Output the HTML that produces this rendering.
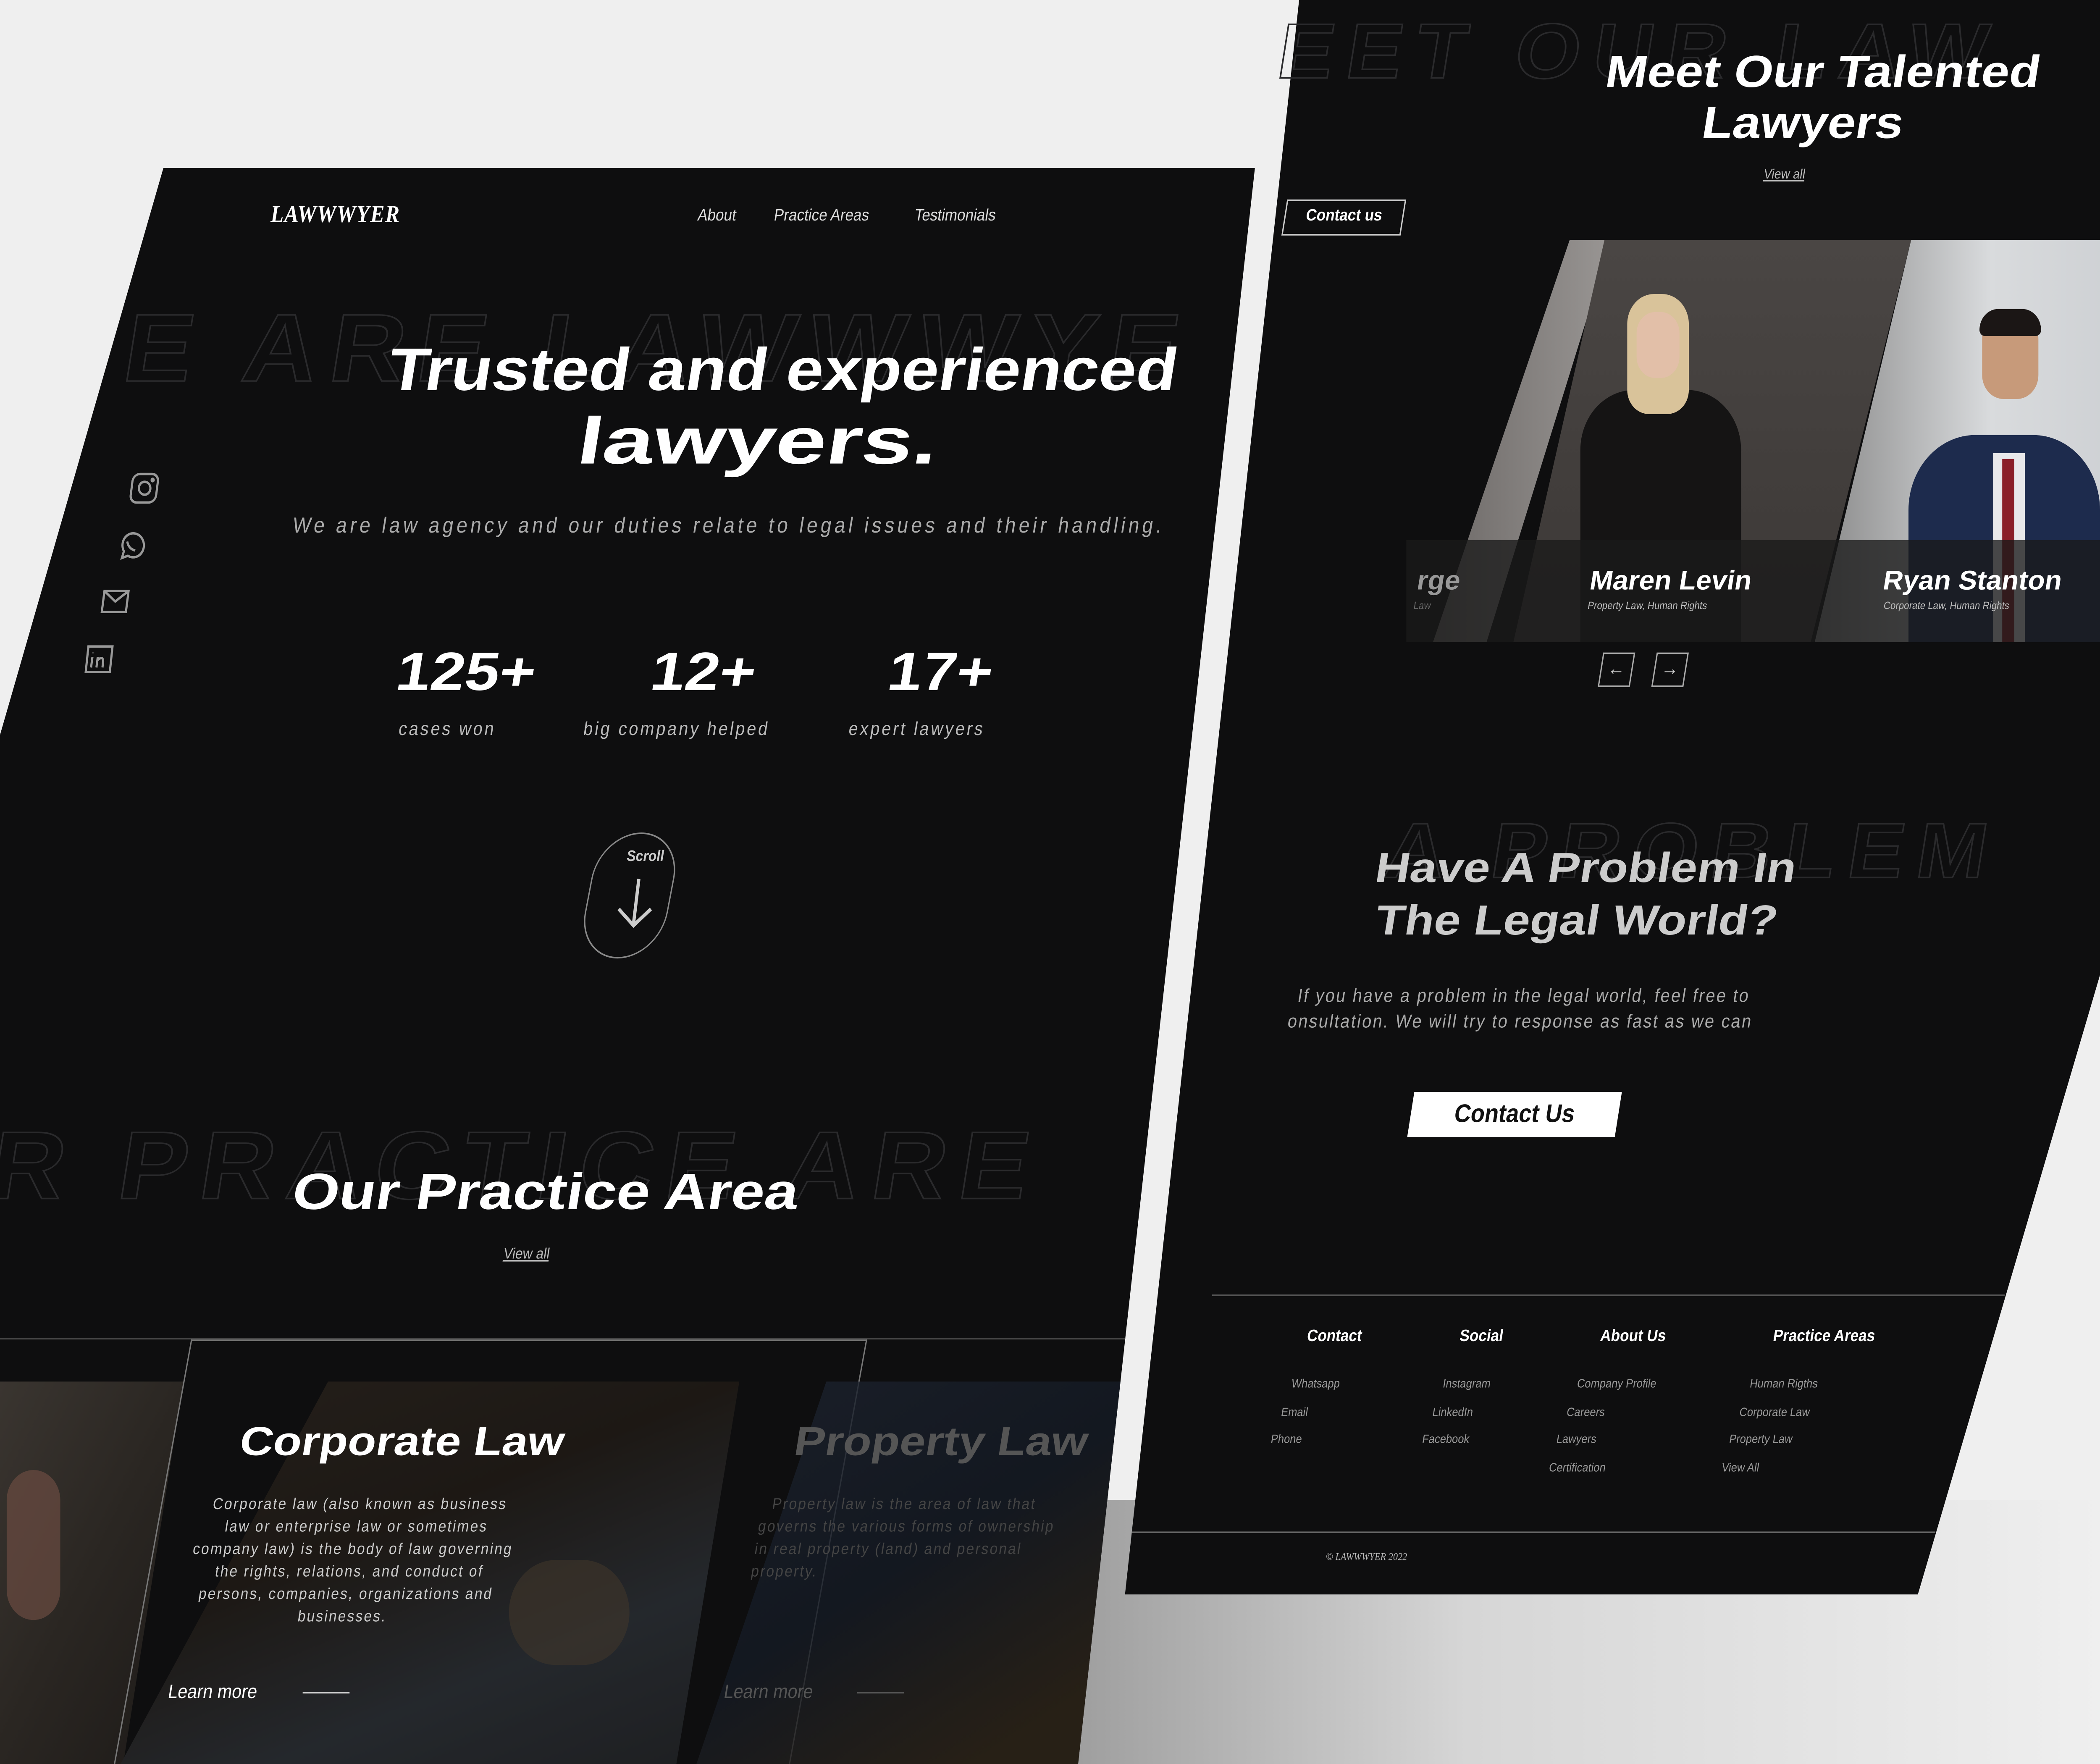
<!DOCTYPE html>
<html><head><meta charset="utf-8"><style>
*{margin:0;padding:0;box-sizing:border-box}
html,body{width:100%;height:100%;overflow:hidden;background:#efefef}
svg.root{position:fixed;left:0;top:0;width:100vw;height:100vh}
#s{position:relative;width:1568px;height:1176px;font-family:"Liberation Sans",sans-serif;color:#fff;background:#efefef;overflow:hidden}
.a{position:absolute;transform-origin:0 0}
.sk{transform:skewX(-10deg)}
.pan{position:absolute;left:0;top:0;width:1568px;height:1176px;background:#0e0e0f}
.out{color:transparent;-webkit-text-stroke:1px #2a2a2c;font-weight:bold;white-space:nowrap;letter-spacing:8px}
.h{font-weight:bold;white-space:nowrap}
.sm{color:#bbb;white-space:nowrap}
</style></head><body>
<svg class="root" viewBox="0 0 1568 1176" preserveAspectRatio="none" xmlns="http://www.w3.org/2000/svg"><foreignObject x="0" y="0" width="1568" height="1176"><div xmlns="http://www.w3.org/1999/xhtml" id="s">
<div class="a" style="left:780px;top:1000px;width:788px;height:176px;background:linear-gradient(90deg,#9a9a9a,#d6d6d6 40%,#efefef)"></div>
<div class="pan" style="clip-path:polygon(970px 0,1568px 0,1568px 650px,1432px 1063px,840px 1063px)"></div>
<div class="pan" style="clip-path:polygon(122px 112px,937px 112px,805px 1176px,0 1176px,0 490px)"></div>

<div class="a out" style="left:960px;top:5px;font-size:52px;transform:skewX(-10deg) scaleX(1.2)">EET OUR LAW</div>
<div class="a h" style="left:1202px;top:32px;font-size:30px;transform:skewX(-10deg) scaleX(1.25)">Meet Our Talented</div>
<div class="a h" style="left:1274px;top:66px;font-size:30px;transform:skewX(-10deg) scaleX(1.25)">Lawyers</div>
<div class="a sm sk" style="left:1318px;top:111px;font-size:9px;text-decoration:underline">View all</div>
<div class="a" style="left:1050px;top:160px;width:518px;height:268px;overflow:hidden">
 <div class="a" style="left:20px;top:0;width:180px;height:268px;background:linear-gradient(90deg,#6c6866,#a9a6a4);clip-path:polygon(102px 0,133px 0,40px 268px,0 268px)"></div>
 <div class="a" style="left:80px;top:0;width:300px;height:268px;background:linear-gradient(180deg,#4a4644,#3c3836);clip-path:polygon(68px 0,297px 0,222px 268px,0 268px)"></div>
 <div class="a" style="left:130px;top:100px;width:120px;height:168px;background:#151414;border-radius:40px 40px 0 0"></div>
 <div class="a" style="left:165px;top:36px;width:46px;height:80px;background:#d9c39a;border-radius:20px 20px 16px 16px"></div>
 <div class="a" style="left:172px;top:48px;width:32px;height:44px;background:#e2bfa8;border-radius:14px"></div>
 <div class="a" style="left:305px;top:0;width:263px;height:268px;background:linear-gradient(90deg,#888,#d9dbdd 50%,#c9ccd0);clip-path:polygon(72px 0,263px 0,263px 268px,0 268px)"></div>
 <div class="a" style="left:375px;top:130px;width:143px;height:140px;background:#1d2b4d;border-radius:50px 50px 0 0"></div>
 <div class="a" style="left:438px;top:142px;width:24px;height:126px;background:#e8e8ea"></div>
 <div class="a" style="left:445px;top:146px;width:9px;height:122px;background:#8a1e28"></div>
 <div class="a" style="left:430px;top:50px;width:42px;height:56px;background:#c79a7a;border-radius:16px"></div>
 <div class="a" style="left:428px;top:46px;width:46px;height:18px;background:#1b1615;border-radius:14px 14px 4px 4px"></div>
 <div class="a" style="left:0;top:200px;width:518px;height:68px;background:rgba(25,25,25,.78)"></div>
</div>
<div class="a h" style="left:1060px;top:377px;font-size:18px;color:#999;transform:skewX(-10deg) scaleX(1.15)">rge</div>
<div class="a sk" style="left:1056px;top:401px;font-size:7px;color:#666">Law</div>
<div class="a h" style="left:1189px;top:377px;font-size:18px;transform:skewX(-10deg) scaleX(1.15)">Maren Levin</div>
<div class="a sm sk" style="left:1186px;top:401px;font-size:7px">Property Law, Human Rights</div>
<div class="a h" style="left:1408px;top:377px;font-size:18px;transform:skewX(-10deg) scaleX(1.15)">Ryan Stanton</div>
<div class="a sm sk" style="left:1407px;top:401px;font-size:7px">Corporate Law, Human Rights</div>
<div class="a sk" style="left:1197px;top:435px;width:24px;height:23px;border:1px solid #aaa;color:#ccc;font-size:13px;text-align:center;line-height:20px">←</div>
<div class="a sk" style="left:1237px;top:435px;width:24px;height:23px;border:1px solid #aaa;color:#ccc;font-size:13px;text-align:center;line-height:20px">→</div>

<div class="a out" style="left:1040px;top:538px;font-size:52px;transform:skewX(-10deg) scaleX(1.2)">A PROBLEM</div>
<div class="a h" style="left:1030px;top:563px;font-size:28px;color:#ccc;transform:skewX(-10deg) scaleX(1.28)">Have A Problem In</div>
<div class="a h" style="left:1030px;top:598px;font-size:28px;color:#ccc;transform:skewX(-10deg) scaleX(1.28)">The Legal World?</div>
<div class="a sk" style="left:966px;top:656px;font-size:12.5px;line-height:17px;color:#aaa;letter-spacing:1px;white-space:nowrap">&nbsp;If you have a problem in the legal world, feel free to<br/>onsultation. We will try to response as fast as we can</div>
<div class="a sk" style="left:1056px;top:728px;width:155px;height:30px;background:#fff;color:#111;font-weight:bold;font-size:17px;text-align:center;line-height:30px">Contact Us</div>

<div class="a" style="left:905px;top:863px;width:592px;height:1px;background:#555"></div>
<div class="a" style="left:845px;top:1021px;width:600px;height:1px;background:#666"></div>
<div class="a h sk" style="left:977px;top:885px;font-size:11px">Contact</div>
<div class="a h sk" style="left:1091px;top:885px;font-size:11px">Social</div>
<div class="a h sk" style="left:1196px;top:885px;font-size:11px">About Us</div>
<div class="a h sk" style="left:1325px;top:885px;font-size:11px">Practice Areas</div>
<div class="a sm sk" style="left:957px;top:914px;font-size:8px;line-height:18.7px;color:#999">&nbsp;&nbsp;&nbsp;&nbsp;Whatsapp<br/>&nbsp;&nbsp;Email<br/>Phone</div>
<div class="a sm sk" style="left:1070px;top:914px;font-size:8px;line-height:18.7px;color:#999">&nbsp;&nbsp;&nbsp;&nbsp;Instagram<br/>&nbsp;&nbsp;LinkedIn<br/>Facebook</div>
<div class="a sm sk" style="left:1168px;top:914px;font-size:8px;line-height:18.7px;color:#999">&nbsp;&nbsp;&nbsp;&nbsp;&nbsp;Company Profile<br/>&nbsp;&nbsp;&nbsp;Careers<br/>&nbsp;Lawyers<br/>Certification</div>
<div class="a sm sk" style="left:1297px;top:914px;font-size:8px;line-height:18.7px;color:#999">&nbsp;&nbsp;&nbsp;&nbsp;&nbsp;Human Rigths<br/>&nbsp;&nbsp;&nbsp;Corporate Law<br/>&nbsp;Property Law<br/>View All</div>
<div class="a sm" style="left:990px;top:1034px;font-size:7px;font-family:'Liberation Serif',serif;font-style:italic">© LAWWWYER 2022</div>

<div class="a" style="left:0;top:0;width:1568px;height:1176px;clip-path:polygon(122px 112px,937px 112px,805px 1176px,0 1176px,0 490px)">
<div class="a" style="left:202px;top:135px;font-family:'Liberation Serif',serif;font-weight:bold;font-style:italic;font-size:16px;letter-spacing:.5px">LAWWWYER</div>
<div class="a sk" style="left:522px;top:138px;font-size:11px;color:#ddd">About</div>
<div class="a sk" style="left:579px;top:138px;font-size:11px;color:#ddd">Practice Areas</div>
<div class="a sk" style="left:684px;top:138px;font-size:11px;color:#ddd">Testimonials</div>
<div class="a out" style="left:100px;top:195px;font-size:64px;transform:skewX(-10deg) scaleX(1.2)">E ARE LAWWWYE</div>
<div class="a out" style="left:0;top:740px;font-size:64px;transform:skewX(-10deg) scaleX(1.2)">R PRACTICE ARE</div>
<div class="a h" style="left:294px;top:225px;font-size:40px;transform:skewX(-10deg) scaleX(1.25)">Trusted and experienced</div>
<div class="a h" style="left:436px;top:270px;font-size:44px;transform:skewX(-10deg) scaleX(1.55)">lawyers.</div>
<div class="a sk" style="left:220px;top:343px;font-size:14.5px;color:#aaa;letter-spacing:2.3px;white-space:nowrap">We are law agency and our duties relate to legal issues and their handling.</div>
<div class="a h" style="left:300px;top:427px;font-size:36px;transform:skewX(-10deg) scaleX(1.28)">125+</div>
<div class="a h" style="left:490px;top:427px;font-size:36px;transform:skewX(-10deg) scaleX(1.28)">12+</div>
<div class="a h" style="left:667px;top:427px;font-size:36px;transform:skewX(-10deg) scaleX(1.28)">17+</div>
<div class="a sm sk" style="left:299px;top:479px;font-size:12.5px;letter-spacing:1.5px">cases won</div>
<div class="a sm sk" style="left:437px;top:479px;font-size:12.5px;letter-spacing:1.5px">big company helped</div>
<div class="a sm sk" style="left:635px;top:479px;font-size:12.5px;letter-spacing:1.5px">expert lawyers</div>
<div class="a" style="left:448px;top:555px;width:62px;height:84px;border:1px solid #888;border-radius:31px;transform:skewX(-12deg)"></div>
<div class="a sm" style="left:468px;top:566px;font-size:10px;font-weight:bold;font-style:italic;color:#ccc">Scroll</div>
<svg class="a" style="left:455px;top:582px" width="40" height="40" viewBox="0 0 40 40"><path d="M22 4 L18 34 M7 24 L18 35 L31 24" stroke="#ccc" stroke-width="2.4" fill="none"/></svg>
<div class="a h" style="left:222px;top:776px;font-size:34px;transform:skewX(-10deg) scaleX(1.32)">Our Practice Area</div>
<div class="a sm sk" style="left:377px;top:831px;font-size:10px;text-decoration:underline">View all</div>
<div class="a" style="left:0;top:892px;width:940px;height:1px;background:#444"></div>
<div class="a" style="left:0;top:921px;width:137px;height:255px;background:linear-gradient(120deg,#3a3530,#2a2622 50%,#1d1a18);clip-path:polygon(0 0,137px 0,92px 255px,0 255px)"></div>
<div class="a" style="left:5px;top:980px;width:40px;height:100px;background:#6b4b42;border-radius:20px;opacity:.7"></div>
<div class="a" style="left:85px;top:893px;width:505px;height:283px;border:1px solid #777;border-bottom:none;transform:skewX(-11.5deg);transform-origin:0 100%"></div>
<div class="a" style="left:90px;top:921px;width:462px;height:255px;background:linear-gradient(160deg,#3b3128,#2c241d 40%,#3a4048 70%,#2d2f33);clip-path:polygon(155px 0,462px 0,415px 255px,0 255px)"></div>
<div class="a" style="left:380px;top:1040px;width:90px;height:70px;background:#6d5a45;border-radius:40px;opacity:.6"></div>
<div class="a" style="left:90px;top:921px;width:462px;height:255px;background:rgba(10,10,10,.45);clip-path:polygon(155px 0,462px 0,415px 255px,0 255px)"></div>
<div class="a h" style="left:182px;top:946px;font-size:27px;transform:skewX(-10deg) scaleX(1.28)">Corporate Law</div>
<div class="a sk" style="left:150px;top:996px;width:240px;font-size:10.5px;line-height:15px;color:#ccc;letter-spacing:1px;text-align:center">Corporate law (also known as business law or enterprise law or sometimes company law) is the body of law governing the rights, relations, and conduct of persons, companies, organizations and businesses.</div>
<div class="a sk" style="left:127px;top:1120px;font-size:13px">Learn more</div>
<div class="a" style="left:226px;top:1128px;width:35px;height:1px;background:#ccc"></div>
<div class="a" style="left:520px;top:921px;width:366px;height:255px;background:linear-gradient(150deg,#1e2430,#141a24 45%,#2d2418 80%);clip-path:polygon(97px 0,366px 0,310px 255px,0 255px);opacity:.8"></div>
<div class="a h" style="left:596px;top:946px;font-size:27px;color:#555;transform:skewX(-10deg) scaleX(1.28)">Property Law</div>
<div class="a sk" style="left:570px;top:996px;width:230px;font-size:10.5px;line-height:15px;color:#444;letter-spacing:1px">&nbsp;&nbsp;Property law is the area of law that governs the various forms of ownership in real property (land) and personal property.</div>
<div class="a sk" style="left:542px;top:1120px;font-size:13px;color:#555">Learn more</div>
<div class="a" style="left:640px;top:1128px;width:35px;height:1px;background:#555"></div>
</div>
<div class="a sk" style="left:961px;top:133px;width:89px;height:24px;border:1.5px solid #ccc;font-size:11px;font-weight:bold;text-align:center;line-height:21px">Contact us</div>
<svg class="a" style="left:96px;top:313px" width="26" height="26" viewBox="0 0 26 26" fill="none" stroke="#999" stroke-width="1.6"><rect x="4" y="3" width="19" height="19" rx="5" transform="skewX(-8)"/><circle cx="12" cy="12.5" r="4.3"/><circle cx="18" cy="7" r=".8"/></svg>
<svg class="a" style="left:85px;top:351px" width="26" height="26" viewBox="0 0 26 26" fill="none" stroke="#999" stroke-width="1.6"><path d="M6 21 L7.5 16.5 A8 8 0 1 1 10.5 19.5 Z"/><path d="M10 10 Q11 15 16 16"/></svg>
<svg class="a" style="left:73px;top:390px" width="26" height="22" viewBox="0 0 26 22" fill="none" stroke="#999" stroke-width="1.6"><path d="M5 4 H23 L21 18 H3 Z M5 4 L13 11 L23 4"/></svg>
<svg class="a" style="left:61px;top:428px" width="26" height="24" viewBox="0 0 26 24" fill="none" stroke="#999" stroke-width="1.6"><path d="M5 3 H23 L21 20 H3 Z"/><path d="M8 10 L7 17 M8.5 7 v.5 M11 17 L12 10 M12 12 Q16 9 16 13 L15.5 17"/></svg>
</div></foreignObject></svg>
</body></html>
